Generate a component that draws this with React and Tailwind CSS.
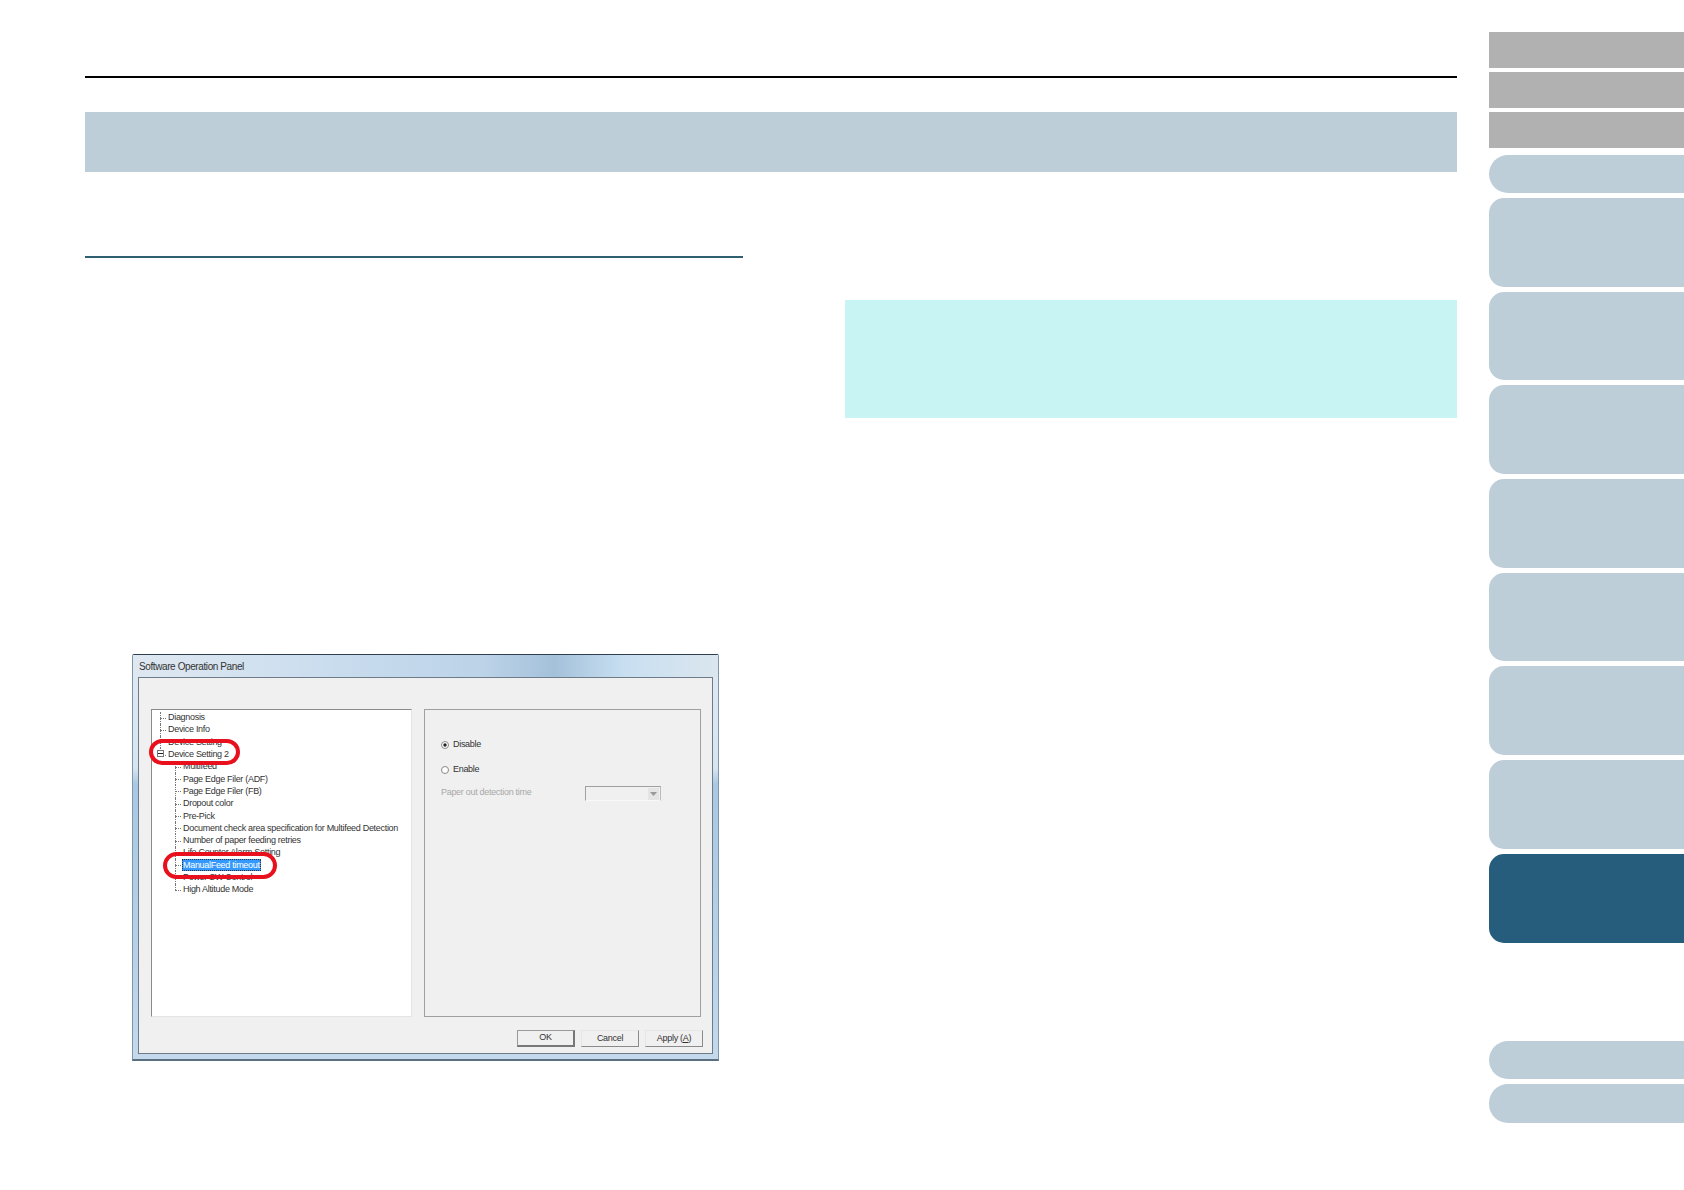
const treeFont = 'font-["Liberation_Sans",Arial,sans-serif]';

function Tab({ className }) {
  return <div className={`w-full ${className}`} />;
}

function TreeRow({ label, child, last, open, selected }) {
  return (
    <div className="flex h-[12.3px] items-center whitespace-nowrap leading-none">
      <div className={child ? 'relative ml-[23px] h-full w-[6px]' : 'relative ml-[8px] h-full w-[6px]'}>
        <div className={`absolute left-0 top-0 border-l border-dotted border-[#777] ${last ? 'h-1/2' : 'h-full'}`} />
        <div className="absolute left-0 top-1/2 w-full border-t border-dotted border-[#777]" />
        {open && (
          <div className="absolute left-[-3px] top-[2px] flex h-[7px] w-[7px] items-center justify-center border border-[#777] bg-white">
            <div className="h-px w-[5px] bg-[#222]" />
          </div>
        )}
      </div>
      <span className={selected ? 'ml-px bg-[#3399ff] px-px py-[1.5px] text-white outline-1 -outline-offset-1 outline-dotted outline-[#333]' : 'ml-[2px]'}>
        {label}
      </span>
    </div>
  );
}

function Radio({ checked }) {
  return (
    <svg width="8" height="8" viewBox="0 0 8 8">
      <circle cx="4" cy="4" r="3.5" fill="#fff" stroke="#888" />
      {checked && <circle cx="4" cy="4" r="1.7" fill="#222" />}
    </svg>
  );
}

function DialogButton({ children, primary }) {
  return (
    <div
      className={
        primary
          ? 'flex h-[17px] w-[58px] items-center justify-center border border-b-2 border-r-2 border-[#9a9a9a] border-b-[#777] border-r-[#777] bg-[#f0f0f0]'
          : 'flex h-[17px] w-[58px] items-center justify-center border border-[#e6e6e6] border-b-[#8a8a8a] border-r-[#8a8a8a] bg-[#f0f0f0]'
      }
    >
      {children}
    </div>
  );
}

function SoftwarePanel() {
  return (
    <div className={`relative mt-[396px] ml-[47px] flex h-[407px] w-[587px] flex-col rounded-t-[2px] border border-[#7e95aa] border-b-2 border-t-[#2f3f4f] border-b-[#5a6f80] bg-[linear-gradient(180deg,#dfe9f2_0%,#d8e5f0_28%,#a9c8e3_32%,#b6d0e8_70%,#c4d9ec_100%)] text-[9px] tracking-[-0.3px] text-[#333] ${treeFont}`}>
      <div className="flex h-[22px] items-center bg-[linear-gradient(90deg,#dfe8f1_0%,#c9dcee_35%,#bcd3e8_60%,#a4c1da_72%,#c8dff1_84%,#dbe6ee_100%)] pl-[6px] text-[10px] tracking-[-0.4px] text-[#333]">
        Software Operation Panel
      </div>
      <div className="mx-[5px] mb-[5px] flex flex-1 flex-col border border-[#6e7b88] bg-[#f0f0f0] pl-[12px] pt-[31px]">
        <div className="flex gap-[12px]">
          <div className="h-[308px] w-[261px] border border-[#8a8a8a] border-b-[#e4e4e4] border-r-[#e4e4e4] bg-white pt-[1.5px]">
            <TreeRow label="Diagnosis" />
            <TreeRow label="Device Info" />
            <TreeRow label="Device Setting" />
            <TreeRow label="Device Setting 2" open last />
            <TreeRow child label="Multifeed" />
            <TreeRow child label="Page Edge Filer (ADF)" />
            <TreeRow child label="Page Edge Filer (FB)" />
            <TreeRow child label="Dropout color" />
            <TreeRow child label="Pre-Pick" />
            <TreeRow child label="Document check area specification for Multifeed Detection" />
            <TreeRow child label="Number of paper feeding retries" />
            <TreeRow child label="Life Counter Alarm Setting" />
            <TreeRow child selected label="ManualFeed timeout" />
            <TreeRow child label="Power SW Control" />
            <TreeRow child last label="High Altitude Mode" />
          </div>
          <div className="h-[308px] w-[277px] border border-[#a0a0a0] pl-[16px] pt-[28px]">
            <div className="flex h-[14px] items-center gap-[4px]">
              <Radio checked />
              <span>Disable</span>
            </div>
            <div className="mt-[11px] flex h-[14px] items-center gap-[4px]">
              <Radio />
              <span>Enable</span>
            </div>
            <div className="mt-[8px] flex h-[16px] items-center text-[#a8a8a8]">
              <span className="w-[144px]">Paper out detection time</span>
              <div className="flex h-[15px] w-[76px] justify-end border border-[#a0a0a0] border-b-[#f8f8f8] border-r-[#bbb] pr-px pt-px">
                <div className="flex h-[12px] w-[11px] items-center justify-center bg-[#e4e4e4]">
                  <svg width="7" height="4" viewBox="0 0 7 4">
                    <path d="M0 0h7L3.5 4z" fill="#999" />
                  </svg>
                </div>
              </div>
            </div>
          </div>
        </div>
        <div className="mt-[13px] flex justify-end gap-[6px] pr-[9px]">
          <DialogButton primary>OK</DialogButton>
          <DialogButton>Cancel</DialogButton>
          <DialogButton>
            <span>Apply (<span className="underline">A</span>)</span>
          </DialogButton>
        </div>
      </div>
      <div className="absolute left-[16px] top-[84px] h-[26px] w-[91px] rounded-full border-[4px] border-[#e8101c]" />
      <div className="absolute left-[30px] top-[197px] h-[27px] w-[114px] rounded-full border-[4px] border-[#e8101c]" />
    </div>
  );
}

export default function App() {
  return (
    <div className="flex h-[1190px] w-[1684px] overflow-hidden bg-white">
      <main className="w-[1489px] pl-[85px] pr-[32px] pt-[76px]">
        <div className="h-[2px] bg-black" />
        <div className="mt-[34px] h-[60px] bg-[#bdced9]" />
        <div className="flex">
          <div className="w-[658px]">
            <div className="mt-[84px] h-[2px] bg-[#2f5f70]" />
            <SoftwarePanel />
          </div>
          <div className="ml-[102px] flex-1">
            <div className="mt-[128px] h-[118px] bg-[#c8f5f3]" />
          </div>
        </div>
      </main>
      <aside className="flex w-[195px] flex-col pt-[32px]">
        <div className="flex flex-col gap-[4px]">
          <Tab className="h-[36px] bg-[#b1b1b1]" />
          <Tab className="h-[36px] bg-[#b1b1b1]" />
          <Tab className="h-[36px] bg-[#b1b1b1]" />
        </div>
        <div className="mt-[7px] flex flex-col gap-[5px]">
          <Tab className="h-[38px] rounded-l-[19px] bg-[#bdced9]" />
          <Tab className="h-[88.7px] rounded-l-[15px] bg-[#bdced9]" />
          <Tab className="h-[88.7px] rounded-l-[15px] bg-[#bdced9]" />
          <Tab className="h-[88.7px] rounded-l-[15px] bg-[#bdced9]" />
          <Tab className="h-[88.7px] rounded-l-[15px] bg-[#bdced9]" />
          <Tab className="h-[88.7px] rounded-l-[15px] bg-[#bdced9]" />
          <Tab className="h-[88.7px] rounded-l-[15px] bg-[#bdced9]" />
          <Tab className="h-[88.7px] rounded-l-[15px] bg-[#bdced9]" />
          <Tab className="h-[88.7px] rounded-l-[15px] bg-[#265d7d]" />
        </div>
        <div className="mt-[98px] flex flex-col gap-[5px]">
          <Tab className="h-[38.5px] rounded-l-[19px] bg-[#bdced9]" />
          <Tab className="h-[38.5px] rounded-l-[19px] bg-[#bdced9]" />
        </div>
      </aside>
    </div>
  );
}
